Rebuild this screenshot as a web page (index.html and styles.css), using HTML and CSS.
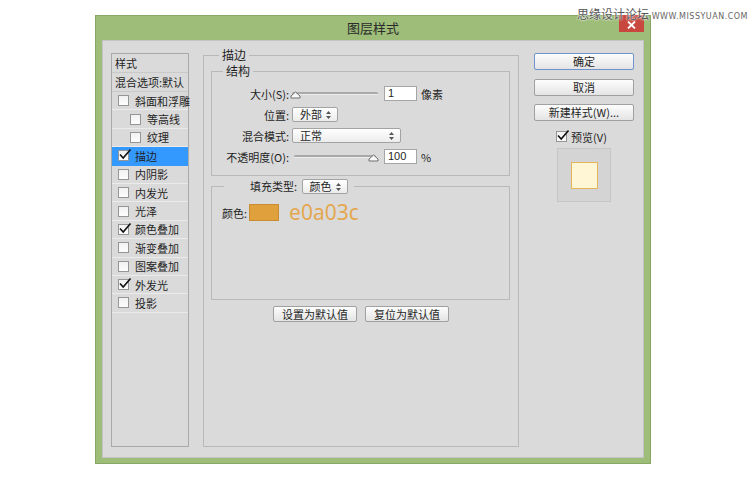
FILE: index.html
```html
<!DOCTYPE html>
<html lang="zh-CN">
<head>
  <meta charset="UTF-8">
  <title>图层样式</title>
  <link rel="stylesheet" href="styles.css">
</head>
<body>
  <div class="watermark">思缘设计论坛 <small>WWW.MISSYUAN.COM</small></div>

  <div class="window">
    <div class="titlebar">
      <span></span>
      <span class="title">图层样式</span>
      <span class="close"><svg viewBox="0 0 9 8" width="9" height="8"><path d="M1 0.5 L8 7.5 M8 0.5 L1 7.5"/></svg></span>
    </div>

    <div class="dialog">
      <!-- left: style list -->
      <ul class="style-list">
        <li class="head">样式</li>
        <li class="head">混合选项:默认</li>
        <li><i class="cb"></i>斜面和浮雕</li>
        <li class="sub"><i class="cb"></i>等高线</li>
        <li class="sub"><i class="cb"></i>纹理</li>
        <li class="active"><i class="cb on"><svg viewBox="0 0 14 13"><path d="M2 6.5 L5.2 10 L12.5 1.5"/></svg></i>描边</li>
        <li><i class="cb"></i>内阴影</li>
        <li><i class="cb"></i>内发光</li>
        <li><i class="cb"></i>光泽</li>
        <li><i class="cb on"><svg viewBox="0 0 14 13"><path d="M2 6.5 L5.2 10 L12.5 1.5"/></svg></i>颜色叠加</li>
        <li><i class="cb"></i>渐变叠加</li>
        <li><i class="cb"></i>图案叠加</li>
        <li><i class="cb on"><svg viewBox="0 0 14 13"><path d="M2 6.5 L5.2 10 L12.5 1.5"/></svg></i>外发光</li>
        <li><i class="cb"></i>投影</li>
      </ul>

      <!-- middle: stroke settings -->
      <fieldset class="group main">
        <legend>描边</legend>

        <fieldset class="group structure">
          <legend>结构</legend>
          <div class="rows">
            <div class="row">
              <label>大小(S):</label>
              <svg class="slider" viewBox="0 0 90 10" width="90" height="10">
                <rect x="2" y="3" width="86" height="3" rx="1.5" fill="#a9a9a9"/>
                <rect x="2" y="5" width="86" height="1" fill="#ececec"/>
                <polygon points="1,9 1,7 5.5,3 10,7 10,9" fill="#f7f7f7" stroke="#6e6e6e"/>
              </svg>
              <span class="field">1</span>
              <span class="unit">像素</span>
            </div>
            <div class="row">
              <label>位置:</label>
              <span class="select short">外部<svg viewBox="0 0 5 8"><path d="M0 3 L2.5 0 L5 3Z M0 5 L2.5 8 L5 5Z"/></svg></span>
            </div>
            <div class="row">
              <label>混合模式:</label>
              <span class="select wide">正常<svg viewBox="0 0 5 8"><path d="M0 3 L2.5 0 L5 3Z M0 5 L2.5 8 L5 5Z"/></svg></span>
            </div>
            <div class="row">
              <label>不透明度(O):</label>
              <svg class="slider" viewBox="0 0 90 10" width="90" height="10">
                <rect x="4" y="3" width="82" height="3" rx="1.5" fill="#a9a9a9"/>
                <rect x="4" y="5" width="82" height="1" fill="#ececec"/>
                <polygon points="79,9 79,7 83.5,3 88,7 88,9" fill="#f7f7f7" stroke="#6e6e6e"/>
              </svg>
              <span class="field">100</span>
              <span class="unit">%</span>
            </div>
          </div>
        </fieldset>

        <fieldset class="group fill">
          <legend>填充类型: <span class="select short">颜色<svg viewBox="0 0 5 8"><path d="M0 3 L2.5 0 L5 3Z M0 5 L2.5 8 L5 5Z"/></svg></span></legend>
          <div class="color-row">
            颜色:<span class="swatch"></span><span class="hex">e0a03c</span>
          </div>
        </fieldset>

        <div class="defaults">
          <button>设置为默认值</button>
          <button>复位为默认值</button>
        </div>
      </fieldset>

      <!-- right: actions -->
      <div class="actions">
        <button class="primary">确定</button>
        <button>取消</button>
        <button>新建样式(W)...</button>
        <div class="preview-check"><i class="cb on"><svg viewBox="0 0 14 13"><path d="M2 6.5 L5.2 10 L12.5 1.5"/></svg></i>预览(V)</div>
        <div class="preview"><span class="preview-swatch"></span></div>
      </div>
    </div>
  </div>
</body>
</html>
```

FILE: styles.css
```css
* {
  box-sizing: border-box;
}
body {
  margin: 0;
  padding-top: 15px;
  position: relative;
  height: 482px;
  background: #fff;
  font-family: "Noto Sans CJK SC", "Noto Sans", sans-serif;
  font-size: 11px;
  color: #1f1f1f;
}
.watermark {
  position: absolute;
  top: 6px;
  left: 577px;
  z-index: 2;
  font-size: 12px;
  line-height: 16px;
  color: #555;
  white-space: nowrap;
  text-shadow: 0 0 2px #fff, 0 0 2px #fff;
}
.watermark small {
  font-family: "DejaVu Sans", sans-serif;
  font-size: 8px;
  letter-spacing: 0.5px;
  color: #666;
}
.window {
  margin-left: 95px;
  width: 556px;
  height: 449px;
  background: #9dbd78;
  border: 1px solid #88a766;
  padding: 0 6px 6px 6px;
}
.titlebar {
  height: 24px;
  display: grid;
  grid-template-columns: 1fr auto 1fr;
  align-items: start;
}
.title {
  font-size: 13px;
  line-height: 24px;
  color: #2b2b2b;
}
.close {
  justify-self: end;
  margin-top: -1px;
  width: 25px;
  height: 17px;
  background: #c8473e;
  display: flex;
  align-items: center;
  justify-content: center;
  padding-top: 3px;
}
.close svg {
  stroke: #fff;
  stroke-width: 1.8;
}
.dialog {
  height: 418px;
  background: #dadada;
  border: 1px solid #c3c3c3;
  padding-left: 8px;
  display: flex;
  align-items: flex-start;
}

/* style list */
.style-list {
  list-style: none;
  margin: 12px 0 0 0;
  padding: 0;
  width: 78px;
  height: 394px;
  border: 1px solid #a9a9a9;
}
.style-list li {
  display: flex;
  align-items: center;
  gap: 6px;
  height: 18.4px;
  padding-left: 6px;
  border-bottom: 1px solid #ebebeb;
  white-space: nowrap;
}
.style-list li.head {
  height: 19px;
  padding-left: 3px;
  border-bottom-color: #c9c9c9;
}
.style-list li.sub {
  padding-left: 18px;
}
.style-list li.active {
  background: #3399ff;
  border-bottom-color: #3399ff;
}
.cb {
  position: relative;
  flex: none;
  width: 11px;
  height: 11px;
  border: 1px solid #959595;
  background: linear-gradient(#f1f1f1, #fdfdfd);
}
.cb svg {
  position: absolute;
  left: -1px;
  top: -3px;
  width: 14px;
  height: 13px;
  fill: none;
  stroke: #111;
  stroke-width: 1.6;
}

/* fieldsets */
.group {
  margin: 0;
  padding: 0;
  min-width: 0;
  border: 1px solid #b9b9b9;
}
.group legend {
  padding: 0 3px;
  line-height: 14px;
}
.main {
  margin: 7px 0 0 14px;
  width: 316px;
  height: 399px;
}
.main > legend {
  margin-left: 15px;
  font-size: 12px;
}
.structure {
  margin: 2px 8px 0 7px;
  height: 112px;
}
.structure > legend {
  margin-left: 11px;
  font-size: 12px;
}
.rows {
  padding-top: 8px;
  display: grid;
  row-gap: 6px;
}
.row {
  display: flex;
  align-items: center;
  height: 15px;
}
.row label {
  width: 77px;
  text-align: right;
  margin-right: 1px;
}
.slider {
  margin-right: 4px;
}
.field {
  width: 33px;
  height: 15px;
  background: #fff;
  border: 1px solid #a5a5a5;
  padding-left: 3px;
  line-height: 13px;
  font-family: "Liberation Sans", sans-serif;
}
.unit {
  margin-left: 4px;
}
.select {
  display: inline-flex;
  align-items: center;
  justify-content: space-between;
  height: 15px;
  padding: 0 6px 0 7px;
  border: 1px solid #a3a3a3;
  border-radius: 2px;
  background: linear-gradient(#ffffff, #ececec);
  line-height: 13px;
}
.row .select {
  margin-left: 2px;
}
.select svg {
  width: 5px;
  height: 8px;
  fill: #555;
}
.select.short {
  width: 46px;
}
.select.wide {
  width: 109px;
}
.fill {
  margin: 3px 8px 0 7px;
  height: 121px;
}
.fill > legend {
  margin-left: 12px;
  padding: 0 6px 0 26px;
  line-height: 15px;
}
.fill > legend .select {
  margin-left: 2px;
}
.color-row {
  display: flex;
  align-items: center;
  padding: 10px 0 0 10px;
}
.swatch {
  width: 30px;
  height: 17px;
  margin-left: 2px;
  background: #e0a03c;
  border: 1px solid #c88d33;
}
.hex {
  margin-left: 10px;
  font-family: "Noto Sans", sans-serif;
  font-size: 21px;
  line-height: 17px;
  color: #e4a74f;
}
.defaults {
  margin-top: 6px;
  display: flex;
  justify-content: center;
  gap: 8px;
}
button {
  height: 16px;
  padding: 0;
  font-family: inherit;
  font-size: 11px;
  line-height: 13px;
  color: #1f1f1f;
  background: linear-gradient(#fdfdfd, #e4e4e4);
  border: 1px solid #a0a0a0;
  border-radius: 2px;
}
.defaults button {
  width: 84px;
}

/* right column */
.actions {
  margin: 12px 0 0 15px;
  width: 100px;
  display: flex;
  flex-direction: column;
  gap: 8.5px;
}
.actions button {
  height: 17px;
}
.actions button.primary {
  border-color: #6f93cc;
}
.preview-check {
  display: flex;
  justify-content: center;
  align-items: center;
  gap: 4px;
  margin-top: -1px;
  padding-right: 5px;
}
.preview {
  align-self: center;
  margin-top: -5px;
  width: 54px;
  height: 54px;
  border: 1px solid #c6c6c6;
  background: #d4d4d4;
  display: flex;
  align-items: center;
  justify-content: center;
}
.preview-swatch {
  width: 27px;
  height: 27px;
  background: #fff6d6;
  border: 1px solid #e5b45c;
}
```
